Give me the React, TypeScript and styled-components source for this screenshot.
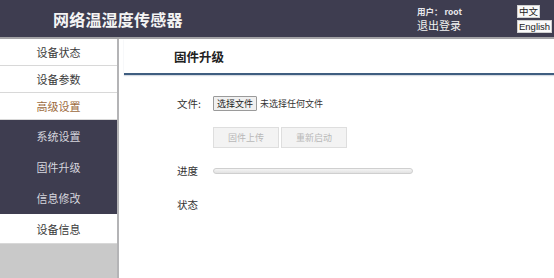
import React from "react";
import styled, { createGlobalStyle } from "styled-components";

const Global = createGlobalStyle`
  html, body { margin: 0; padding: 0; background: #fff; }
  body { width: 554px; height: 278px; overflow: hidden; font-family: "Noto Sans CJK SC", "Noto Sans", sans-serif; }
  * { box-sizing: border-box; }
`;

const Page = styled.div`
  width: 554px;
  height: 278px;
  display: flex;
  flex-direction: column;
`;

const Header = styled.header`
  height: 39px;
  flex: none;
  background: #3e3d50;
  border-bottom: 2px solid #a3a3a6;
  display: flex;
  align-items: center;
  padding-left: 53px;
  color: #fff;
`;

const Title = styled.h1`
  margin: 0;
  font-size: 16px;
  font-weight: 700;
  letter-spacing: 0.2px;
  line-height: 1;
  color: #f4f4f4;
`;

const UserBox = styled.div`
  margin-left: auto;
  display: flex;
  flex-direction: column;
  gap: 1px;
  width: 100px;
  margin-top: 1px;
`;

const UserName = styled.span`
  font-size: 8.5px;
  font-weight: 700;
  line-height: 11px;
  color: #e8e8ec;
`;

const Logout = styled.span`
  font-size: 11px;
  line-height: 14px;
  color: #f2f2f2;
`;

const LangBox = styled.div`
  display: flex;
  flex-direction: column;
  align-items: flex-start;
  gap: 2px;
  width: 37px;
`;

const LangBtn = styled.span`
  background: #fafafa;
  color: #222;
  font-size: 9.5px;
  line-height: 11px;
  padding: 0 1px;
  border: 1px solid #d0d0d0;
  font-family: "Liberation Sans", "Noto Sans CJK SC", sans-serif;
`;

const Body = styled.div`
  flex: 1;
  display: flex;
  min-height: 0;
`;

const Sidebar = styled.nav`
  width: 119px;
  flex: none;
  background: #c9c9c9;
  border-right: 2px solid #b4b4b6;
  display: flex;
  flex-direction: column;
`;

const NavItem = styled.div<{ $variant?: "main" | "sub" | "active"; $h: number }>`
  height: ${(p) => p.$h}px;
  display: flex;
  align-items: center;
  justify-content: center;
  font-size: 11px;
  background: ${(p) => (p.$variant === "sub" ? "#3e3d50" : "#fff")};
  color: ${(p) =>
    p.$variant === "sub" ? "#d6d6de" : p.$variant === "active" ? "#9c6a3e" : "#3a3a3a"};
  border-bottom: 1px solid ${(p) => (p.$variant === "sub" ? "#3e3d50" : "#d8d8d8")};
`;

const Content = styled.main`
  flex: 1;
  padding-left: 5px;
  display: flex;
  flex-direction: column;
`;

const ContentHead = styled.div`
  height: 36px;
  display: flex;
  align-items: center;
  padding-left: 50px;
  padding-top: 1px;
  border-bottom: 2px solid #3f5e80;
  box-shadow: 0 1px 1px rgba(90, 110, 140, 0.25);
`;

const ContentTitle = styled.h2`
  margin: 0;
  font-size: 12.5px;
  font-weight: 700;
  color: #222;
`;

const Form = styled.div`
  padding-left: 53px;
  display: flex;
  flex-direction: column;
`;

const Row = styled.div<{ $mt: number }>`
  display: flex;
  align-items: center;
  margin-top: ${(p) => p.$mt}px;
`;

const Label = styled.span`
  width: 36px;
  font-size: 10.5px;
  color: #333;
  line-height: 14px;
`;

const FileBtn = styled.span`
  height: 15px;
  padding: 0 3px;
  display: flex;
  align-items: center;
  font-size: 9px;
  color: #222;
  background: #f0f0f0;
  border: 1px solid #9a9a9a;
  border-radius: 1px;
`;

const FileText = styled.span`
  font-size: 9px;
  color: #333;
  margin-left: 3px;
`;

const ActionBtn = styled.span`
  width: 66px;
  height: 21px;
  display: flex;
  align-items: center;
  justify-content: center;
  font-size: 9px;
  color: #b8b8b8;
  background: #f3f3f3;
  border: 1px solid #dedede;
  margin-right: 2px;
`;

const Progress = styled.div`
  width: 200px;
  height: 6px;
  border-radius: 3px;
  border: 1px solid #cfcfcf;
  background: linear-gradient(#f4f4f4, #e2e2e2);
`;

export default function App() {
  return (
    <Page>
      <Global />
      <Header>
        <Title>网络温湿度传感器</Title>
        <UserBox>
          <UserName>用户： root</UserName>
          <Logout>退出登录</Logout>
        </UserBox>
        <LangBox>
          <LangBtn>中文</LangBtn>
          <LangBtn>English</LangBtn>
        </LangBox>
      </Header>
      <Body>
        <Sidebar>
          <NavItem $h={27}>设备状态</NavItem>
          <NavItem $h={27}>设备参数</NavItem>
          <NavItem $h={27} $variant="active">高级设置</NavItem>
          <NavItem $h={32} $variant="sub">系统设置</NavItem>
          <NavItem $h={31} $variant="sub">固件升级</NavItem>
          <NavItem $h={31} $variant="sub">信息修改</NavItem>
          <NavItem $h={30}>设备信息</NavItem>
        </Sidebar>
        <Content>
          <ContentHead>
            <ContentTitle>固件升级</ContentTitle>
          </ContentHead>
          <Form>
            <Row $mt={21}>
              <Label>文件:</Label>
              <FileBtn>选择文件</FileBtn>
              <FileText>未选择任何文件</FileText>
            </Row>
            <Row $mt={16}>
              <Label />
              <ActionBtn>固件上传</ActionBtn>
              <ActionBtn>重新启动</ActionBtn>
            </Row>
            <Row $mt={16}>
              <Label>进度</Label>
              <Progress />
            </Row>
            <Row $mt={20}>
              <Label>状态</Label>
            </Row>
          </Form>
        </Content>
      </Body>
    </Page>
  );
}
